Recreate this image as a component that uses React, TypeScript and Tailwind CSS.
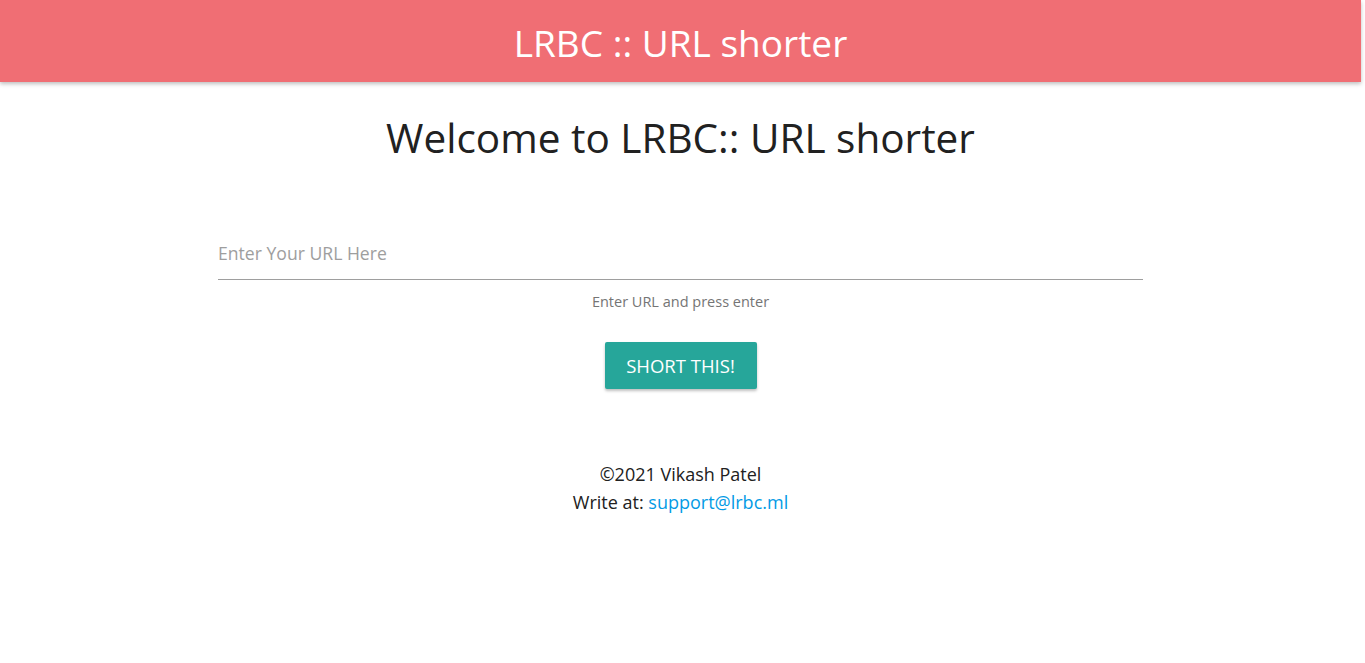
import React from "react";

export default function App() {
  const font = { fontFamily: '"Open Sans", "Noto Sans", sans-serif' };
  return (
    <div className="w-[1361px] min-h-[663px] bg-white" style={font}>
      <header className="h-[82px] bg-[#f06e74] flex items-center justify-center shadow-[0_2px_4px_rgba(0,0,0,0.25)]">
        <h1 className="text-white text-[37px] leading-none pt-[2px]">LRBC :: URL shorter</h1>
      </header>
      <main className="flex flex-col items-center">
        <h2 className="mt-[28px] text-[40.5px] leading-[56px] text-[#212121]">Welcome to LRBC:: URL shorter</h2>
        <div className="mt-[60px] w-[925px]">
          <input
            className="w-full h-[54px] border-b border-[#9e9e9e] outline-none text-[17.6px] placeholder:text-[#9e9e9e] bg-transparent"
            placeholder="Enter Your URL Here"
          />
        </div>
        <p className="mt-[12px] text-[14.5px] leading-[20px] text-[#757575]">Enter URL and press enter</p>
        <button className="mt-[30px] w-[152px] h-[47px] bg-[#26a69a] text-white text-[18.5px] rounded-[2px] shadow-[0_2px_3px_rgba(0,0,0,0.25)]">
          SHORT THIS!
        </button>
        <footer className="mt-[71px] text-center text-[18px] leading-[28px] text-[#212121]">
          <div>©2021 Vikash Patel</div>
          <div>
            Write at: <a className="text-[#039be5]" href="#">support@lrbc.ml</a>
          </div>
        </footer>
      </main>
    </div>
  );
}
